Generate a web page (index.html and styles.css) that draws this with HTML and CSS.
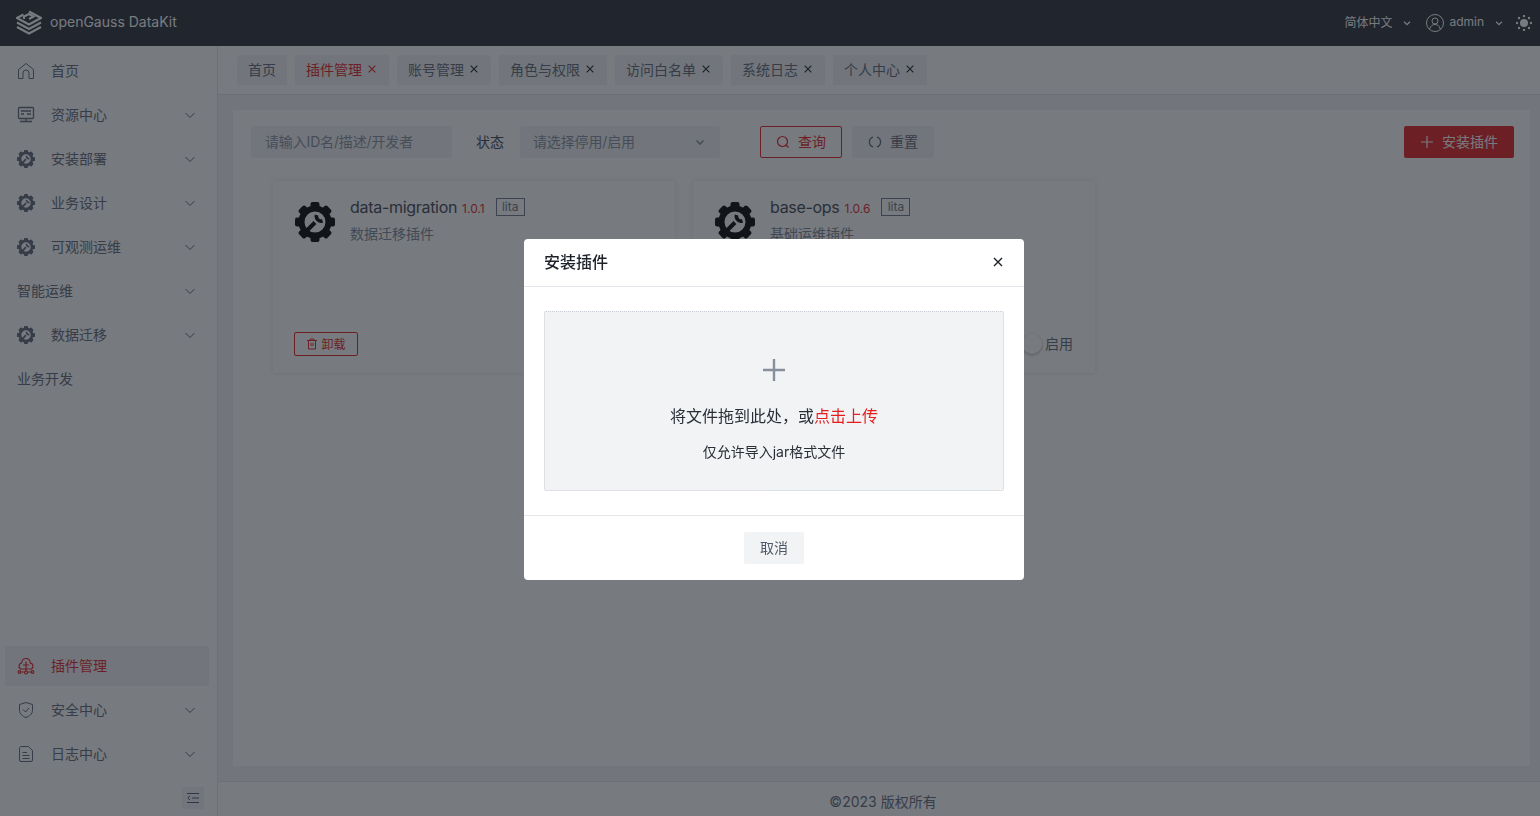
FILE: index.html
```html
<!DOCTYPE html>
<html lang="zh-CN">
<head>
    <meta charset="UTF-8">
    <meta name="viewport" content="width=device-width, initial-scale=1.0">
    <title>openGauss DataKit</title>
    <link rel="stylesheet" href="styles.css">
</head>
<body>
    <svg class="sprites" width="0" height="0">
        <symbol id="gear" viewBox="0 0 40 40">
            <circle cx="20" cy="20" r="13.5" fill="none" stroke="currentColor" stroke-width="6"/>
            <g fill="currentColor">
                <rect x="15.5" y="0" width="9" height="7" rx="2"/>
                <rect x="15.5" y="0" width="9" height="7" rx="2" transform="rotate(45 20 20)"/>
                <rect x="15.5" y="0" width="9" height="7" rx="2" transform="rotate(90 20 20)"/>
                <rect x="15.5" y="0" width="9" height="7" rx="2" transform="rotate(135 20 20)"/>
                <rect x="15.5" y="0" width="9" height="7" rx="2" transform="rotate(180 20 20)"/>
                <rect x="15.5" y="0" width="9" height="7" rx="2" transform="rotate(225 20 20)"/>
                <rect x="15.5" y="0" width="9" height="7" rx="2" transform="rotate(270 20 20)"/>
                <rect x="15.5" y="0" width="9" height="7" rx="2" transform="rotate(315 20 20)"/>
            </g>
            <path d="M10.5 30 L20 20.5" fill="none" stroke="currentColor" stroke-width="4"/>
            <path d="M21.5 13 A5 5 0 0 0 27.5 19" fill="none" stroke="currentColor" stroke-width="3.6"/>
        </symbol>
        <symbol id="chev" viewBox="0 0 12 12">
            <path d="M1.5 4 L6 8.5 L10.5 4" fill="none" stroke="currentColor" stroke-width="1"/>
        </symbol>
        <symbol id="chev-b" viewBox="0 0 12 12">
            <path d="M2.5 4.5 L6 8 L9.5 4.5" fill="none" stroke="currentColor" stroke-width="1.6"/>
        </symbol>
        <symbol id="close" viewBox="0 0 12 12">
            <path d="M2 2 L10 10 M10 2 L2 10" fill="none" stroke="currentColor" stroke-width="1.4"/>
        </symbol>
        <symbol id="plus" viewBox="0 0 14 14">
            <path d="M7 1 V13 M1 7 H13" fill="none" stroke="currentColor" stroke-width="1.2"/>
        </symbol>
    </svg>

    <header class="topbar">
        <svg class="logo" width="26" height="26" viewBox="0 0 26 26" fill="none" stroke="currentColor" stroke-width="2.2">
            <path d="M13 1.5 L25 8 L13 14.5 L1 8 L7.5 4.5"/>
            <path d="M8 9 L8 6.5 L13 4 L17.5 6.5 L13 9"/>
            <path d="M1 12.5 L13 19 L25 12.5"/>
            <path d="M1 17 L13 23.5 L25 17"/>
        </svg>
        <span class="brand">openGauss DataKit</span>
        <div class="top-right">
            <span class="top-txt">简体中文</span>
            <svg class="top-chev" width="10" height="10"><use href="#chev-b"/></svg>
            <svg class="user" width="18" height="18" viewBox="0 0 18 18" fill="none" stroke="currentColor">
                <circle cx="9" cy="9" r="8.5"/>
                <circle cx="9" cy="7" r="3"/>
                <path d="M3.8 15 C4.5 11.8 6.5 10.5 9 10.5 C11.5 10.5 13.5 11.8 14.2 15"/>
            </svg>
            <span class="top-txt">admin</span>
            <svg class="top-chev" width="10" height="10"><use href="#chev-b"/></svg>
            <svg class="sun" width="16" height="16" viewBox="0 0 16 16" fill="currentColor">
                <circle cx="8" cy="8" r="4"/>
                <circle cx="8" cy="1" r="1.2"/><circle cx="8" cy="15" r="1.2"/>
                <circle cx="1" cy="8" r="1.2"/><circle cx="15" cy="8" r="1.2"/>
                <circle cx="3" cy="3" r="1.2"/><circle cx="13" cy="3" r="1.2"/>
                <circle cx="3" cy="13" r="1.2"/><circle cx="13" cy="13" r="1.2"/>
            </svg>
        </div>
    </header>

    <div class="layout">
        <aside class="sidebar">
            <nav class="menu">
                <a class="menu-item">
                    <svg class="ico" viewBox="0 0 18 18" fill="none" stroke="currentColor"><path d="M1.5 7.5 L9 1.5 L16.5 7.5 V16.5 H12 V11 A3 3 0 0 0 6 11 V16.5 H1.5 Z"/></svg>
                    <span>首页</span>
                </a>
                <a class="menu-item">
                    <svg class="ico" viewBox="0 0 18 18" fill="none" stroke="currentColor" stroke-width="1.3"><rect x="1.5" y="1.5" width="15" height="11" rx="1"/><path d="M4 5 H14 M4 8 H7 M10 8 H14 M9 12.5 V15 M3 15.5 H15"/></svg>
                    <span>资源中心</span>
                    <svg class="chev" width="12" height="12"><use href="#chev"/></svg>
                </a>
                <a class="menu-item">
                    <svg class="ico"><use href="#gear"/></svg>
                    <span>安装部署</span>
                    <svg class="chev" width="12" height="12"><use href="#chev"/></svg>
                </a>
                <a class="menu-item">
                    <svg class="ico"><use href="#gear"/></svg>
                    <span>业务设计</span>
                    <svg class="chev" width="12" height="12"><use href="#chev"/></svg>
                </a>
                <a class="menu-item">
                    <svg class="ico"><use href="#gear"/></svg>
                    <span>可观测运维</span>
                    <svg class="chev" width="12" height="12"><use href="#chev"/></svg>
                </a>
                <a class="menu-item">
                    <span>智能运维</span>
                    <svg class="chev" width="12" height="12"><use href="#chev"/></svg>
                </a>
                <a class="menu-item">
                    <svg class="ico"><use href="#gear"/></svg>
                    <span>数据迁移</span>
                    <svg class="chev" width="12" height="12"><use href="#chev"/></svg>
                </a>
                <a class="menu-item">
                    <span>业务开发</span>
                </a>
            </nav>

            <nav class="menu menu-bottom">
                <a class="menu-item active">
                    <svg class="ico" viewBox="0 0 18 18" fill="none" stroke="currentColor" stroke-width="1.2"><path d="M3.5 12 C1 10 2 6.5 4.5 6.2 C5 3 7 1.5 9 1.5 C11 1.5 13 3 13.5 6.2 C16 6.5 17 10 14.5 12 Z"/><path d="M9 4.5 V14.5 M6 8 H12"/><circle cx="2.5" cy="15" r="1.3"/><circle cx="9" cy="15.5" r="1.5"/><circle cx="15.5" cy="15" r="1.3"/><path d="M4 15 H7.5 M10.5 15 H14"/></svg>
                    <span>插件管理</span>
                </a>
                <a class="menu-item">
                    <svg class="ico" viewBox="0 0 18 18" fill="none" stroke="currentColor"><path d="M9 1.5 L15.5 3.5 V9.5 C15.5 13 12 15.5 9 16.5 C6 15.5 2.5 13 2.5 9.5 V3.5 Z"/><path d="M6 8.5 L8.5 11 L12 7"/></svg>
                    <span>安全中心</span>
                    <svg class="chev" width="12" height="12"><use href="#chev"/></svg>
                </a>
                <a class="menu-item">
                    <svg class="ico" viewBox="0 0 18 18" fill="none" stroke="currentColor"><path d="M3.5 1.5 H11.5 L15.5 5.5 V15 A1.5 1.5 0 0 1 14 16.5 H4 A1.5 1.5 0 0 1 2.5 15 V2.5 Z"/><path d="M5.5 7.5 H10 M5.5 10.5 H12.5 M5.5 13.5 H12.5"/></svg>
                    <span>日志中心</span>
                    <svg class="chev" width="12" height="12"><use href="#chev"/></svg>
                </a>
            </nav>
            <div class="collapse">
                <svg width="12" height="12" viewBox="0 0 12 12" fill="none" stroke="currentColor"><path d="M0 1.5 H12 M5 6 H12 M0 10.5 H12 M3 4 L0.8 6 L3 8"/></svg>
            </div>
        </aside>

        <div class="main">
            <div class="tabs">
                <span class="tab">首页</span>
                <span class="tab on">插件管理 <svg width="10" height="10"><use href="#close"/></svg></span>
                <span class="tab">账号管理 <svg width="10" height="10"><use href="#close"/></svg></span>
                <span class="tab">角色与权限 <svg width="10" height="10"><use href="#close"/></svg></span>
                <span class="tab">访问白名单 <svg width="10" height="10"><use href="#close"/></svg></span>
                <span class="tab">系统日志 <svg width="10" height="10"><use href="#close"/></svg></span>
                <span class="tab">个人中心 <svg width="10" height="10"><use href="#close"/></svg></span>
            </div>

            <main class="content">
                <div class="panel">
                    <div class="filter">
                        <input class="field search" placeholder="请输入ID名/描述/开发者">
                        <span class="label">状态</span>
                        <div class="field select">
                            <span>请选择停用/启用</span>
                            <svg width="12" height="12"><use href="#chev-b"/></svg>
                        </div>
                        <button class="btn outline">
                            <svg width="14" height="14" viewBox="0 0 14 14" fill="none" stroke="currentColor" stroke-width="1.2"><circle cx="6.5" cy="6.5" r="5"/><path d="M10 10 L12.5 12.5"/></svg>
                            查询
                        </button>
                        <button class="btn gray">
                            <svg width="14" height="14" viewBox="0 0 14 14" fill="none" stroke="currentColor" stroke-width="1.3"><path d="M5 2.2 A5 5 0 0 0 5 11.8 M9 2.2 A5 5 0 0 1 9 11.8"/></svg>
                            重置
                        </button>
                        <button class="btn primary">
                            <svg width="14" height="14"><use href="#plus"/></svg>
                            安装插件
                        </button>
                    </div>

                    <div class="cards">
                        <div class="card">
                            <div class="card-top">
                                <svg class="plug-ico"><use href="#gear"/></svg>
                                <div>
                                    <div class="title-row">
                                        <span class="name">data-migration</span>
                                        <span class="ver">1.0.1</span>
                                        <span class="tag">lita</span>
                                    </div>
                                    <div class="desc">数据迁移插件</div>
                                </div>
                            </div>
                            <div class="card-foot">
                                <button class="btn-sm">
                                    <svg width="12" height="12" viewBox="0 0 12 12" fill="none" stroke="currentColor"><path d="M1 2.5 H11 M4 2.5 V1 H8 V2.5 M2.5 2.5 V11 H9.5 V2.5 M5 5 V8 M7 5 V8"/></svg>
                                    卸载
                                </button>
                                <div class="switch-wrap">
                                    <span class="switch"><i class="knob"></i></span>
                                    <span class="switch-txt">启用</span>
                                </div>
                            </div>
                        </div>
                        <div class="card">
                            <div class="card-top">
                                <svg class="plug-ico"><use href="#gear"/></svg>
                                <div>
                                    <div class="title-row">
                                        <span class="name">base-ops</span>
                                        <span class="ver">1.0.6</span>
                                        <span class="tag">lita</span>
                                    </div>
                                    <div class="desc">基础运维插件</div>
                                </div>
                            </div>
                            <div class="card-foot">
                                <button class="btn-sm">
                                    <svg width="12" height="12" viewBox="0 0 12 12" fill="none" stroke="currentColor"><path d="M1 2.5 H11 M4 2.5 V1 H8 V2.5 M2.5 2.5 V11 H9.5 V2.5 M5 5 V8 M7 5 V8"/></svg>
                                    卸载
                                </button>
                                <div class="switch-wrap">
                                    <span class="switch"><i class="knob"></i></span>
                                    <span class="switch-txt">启用</span>
                                </div>
                            </div>
                        </div>
                    </div>
                </div>
            </main>

            <footer class="foot">©2023 版权所有</footer>
        </div>
    </div>

    <div class="mask">
        <div class="modal">
            <div class="modal-head">
                <span>安装插件</span>
                <svg width="12" height="12"><use href="#close"/></svg>
            </div>
            <div class="modal-body">
                <div class="upload">
                    <svg class="up-plus" width="26" height="26" viewBox="0 0 26 26" fill="none" stroke="currentColor" stroke-width="2.4"><path d="M13 2 V24 M2 13 H24"/></svg>
                    <div class="up-main">将文件拖到此处，或<em>点击上传</em></div>
                    <div class="up-sub">仅允许导入jar格式文件</div>
                </div>
            </div>
            <div class="modal-foot">
                <button class="btn-cancel">取消</button>
            </div>
        </div>
    </div>
</body>
</html>
```

FILE: styles.css
```css
* {
    box-sizing: border-box;
}

body {
    margin: 0;
    height: 100vh;
    overflow: hidden;
    display: flex;
    flex-direction: column;
    background-color: #fff;
    color: #4e5969;
    font-family: Inter, "Noto Sans CJK SC", sans-serif;
    font-size: 14px;
}

button,
input {
    font: inherit;
}

.sprites {
    display: none;
}

/* top bar */
.topbar {
    height: 46px;
    flex: none;
    display: flex;
    align-items: center;
    padding: 0 8px 0 16px;
    background-color: #272b35;
    color: #fff;
}

.logo {
    flex: none;
}

.brand {
    margin: 0 0 3px 8px;
    font-size: 14px;
}

.top-right {
    margin-left: auto;
    display: flex;
    align-items: center;
}

.top-txt {
    margin-bottom: 3px;
    font-size: 12px;
}

.top-chev {
    margin: 0 0 0 10px;
}

.user {
    margin: 0 5px 0 14px;
}

.sun {
    margin-left: 12px;
}

.layout {
    flex: 1;
    min-height: 0;
    display: flex;
}

/* left menu */
.sidebar {
    width: 218px;
    flex: none;
    display: flex;
    flex-direction: column;
    padding: 3px 8px 7px 5px;
    border-right: 1px solid #e5e6eb;
    background-color: #fff;
}

.menu-item {
    height: 44px;
    display: flex;
    align-items: center;
    padding: 0 13px 0 12px;
    color: #5c6675;
}

.menu-item span {
    margin-bottom: 2px;
}

.menu-bottom {
    margin-top: auto;
}

.menu-bottom .menu-item {
    margin-bottom: 4px;
    height: 40px;
}

.menu-item.active {
    background-color: #f2f3f5;
    color: #e41d1d;
    border-radius: 2px;
}

.ico {
    width: 18px;
    height: 18px;
    margin-right: 16px;
    flex: none;
}

.chev {
    margin-left: auto;
}

.collapse {
    align-self: flex-end;
    width: 22px;
    height: 22px;
    margin: 9px 5px 0 0;
    display: flex;
    align-items: center;
    justify-content: center;
    background-color: #f2f3f5;
    color: #4e5969;
}

/* tabs */
.main {
    flex: 1;
    min-width: 0;
    display: flex;
    flex-direction: column;
    background-color: #f2f3f5;
}

.tabs {
    height: 49px;
    flex: none;
    display: flex;
    align-items: center;
    gap: 8px;
    padding: 0 19px;
    border-bottom: 1px solid #e5e6eb;
    background-color: #fff;
}

.tab {
    height: 30px;
    display: flex;
    align-items: center;
    gap: 5px;
    padding: 0 11px 2px;
    background-color: #f2f3f5;
    border-radius: 2px;
    color: #5c6675;
}

.tab svg {
    margin-right: 1px;
    color: #1d2129;
}

.tab.on,
.tab.on svg {
    color: #e41d1d;
}

/* plugin list */
.content {
    flex: 1;
    min-height: 0;
    padding: 15px 10px 15px 15px;
}

.panel {
    height: 100%;
    padding: 16px 16px 0 18px;
    background-color: #fff;
}

.filter {
    display: flex;
    align-items: center;
}

.field {
    height: 32px;
    border: 0;
    border-radius: 2px;
    background-color: #f2f3f5;
    padding: 0 14px 2px;
    color: #86909c;
    letter-spacing: -0.15px;
    outline: none;
}

.field::placeholder {
    color: #86909c;
}

.search {
    width: 201px;
}

.label {
    margin: 0 16px 2px 24px;
    color: #3c4450;
}

.select {
    width: 200px;
    display: flex;
    align-items: center;
    justify-content: space-between;
    padding-left: 13px;
}

.select svg {
    margin-top: 2px;
}

.btn {
    height: 32px;
    display: flex;
    align-items: center;
    gap: 8px;
    padding: 0 15px 2px;
    border: 1px solid transparent;
    border-radius: 2px;
    cursor: pointer;
}

.btn svg {
    margin-top: 2px;
}

.outline {
    margin-left: 40px;
    background-color: #fff;
    border-color: #e41d1d;
    color: #e41d1d;
}

.gray {
    margin-left: 10px;
    background-color: #f2f3f5;
    color: #5c6675;
}

.primary {
    margin-left: auto;
    background-color: #e41d1d;
    color: #fff;
}

.cards {
    display: flex;
    gap: 18px;
    margin: 23px 0 0 22px;
}

.card {
    width: 402px;
    height: 192px;
    display: flex;
    flex-direction: column;
    padding: 17px 22px 17px 21px;
    background-color: #fff;
    box-shadow: 0 0 6px rgba(0, 0, 0, 0.1);
}

.card-top {
    display: flex;
    gap: 15px;
    padding-left: 1px;
}

.plug-ico {
    width: 40px;
    height: 40px;
    margin-top: 4px;
    flex: none;
    color: #000;
}

.title-row {
    display: flex;
    align-items: center;
    height: 18px;
}

.name {
    font-size: 16px;
    letter-spacing: -0.3px;
    color: #3c4450;
}

.ver {
    margin: 2px 0 0 5px;
    font-size: 12px;
    color: #e41d1d;
}

.tag {
    width: 29px;
    margin-left: 11px;
    height: 18px;
    border: 1px solid #6b7785;
    font-size: 12px;
    line-height: 16px;
    text-align: center;
    color: #6b7785;
}

.desc {
    margin-top: 7px;
    color: #7a8594;
}

.card-foot {
    margin-top: auto;
    display: flex;
    align-items: center;
    justify-content: space-between;
}

.btn-sm {
    height: 24px;
    width: 64px;
    display: flex;
    align-items: center;
    justify-content: center;
    gap: 3px;
    padding: 0 0 2px;
    border: 1px solid #e41d1d;
    border-radius: 2px;
    background-color: #fff;
    color: #e41d1d;
    font-size: 12px;
}

.btn-sm svg {
    margin-top: 2px;
}

.switch-wrap {
    display: flex;
    align-items: center;
    gap: 3px;
}

.switch-txt {
    margin-bottom: 2px;
    color: #5c6675;
}

.switch {
    width: 40px;
    height: 24px;
    display: flex;
    align-items: center;
    justify-content: flex-end;
}

.knob {
    width: 20px;
    height: 20px;
    border-radius: 50%;
    background-color: #fff;
    box-shadow: 0 1px 3px rgba(0, 0, 0, 0.35);
}

.foot {
    height: 35px;
    flex: none;
    display: flex;
    align-items: center;
    justify-content: center;
    padding: 4px 0 0 8px;
    border-top: 1px solid #e5e6eb;
    background-color: #fff;
    color: #5c6675;
}

/* dialog */
.mask {
    position: fixed;
    inset: 0;
    display: flex;
    justify-content: center;
    align-items: flex-start;
    padding: 239px 0 0 8px;
    background-color: rgba(29, 33, 41, 0.6);
}

.modal {
    width: 500px;
    border-radius: 4px;
    background-color: #fff;
    overflow: hidden;
}

.modal-head {
    height: 48px;
    display: flex;
    align-items: center;
    justify-content: space-between;
    padding: 0 20px 4px;
    border-bottom: 1px solid #e5e6eb;
    font-size: 16px;
    font-weight: 500;
    color: #1d2129;
}

.modal-head svg {
    margin-top: 2px;
}

.modal-body {
    padding: 24px 20px;
}

.upload {
    height: 180px;
    display: flex;
    flex-direction: column;
    align-items: center;
    border: 1px dotted #c9cdd4;
    border-radius: 2px;
    background-color: #f2f3f5;
    color: #2a2e36;
}

.up-plus {
    margin-top: 45px;
    color: #86909c;
}

.up-main {
    margin-top: 20px;
    font-size: 16px;
}

.up-main em {
    font-style: normal;
    color: #e41d1d;
}

.up-sub {
    margin-top: 14px;
}

.modal-foot {
    height: 65px;
    display: flex;
    justify-content: center;
    padding-top: 16px;
    border-top: 1px solid #e5e6eb;
}

.btn-cancel {
    width: 60px;
    height: 32px;
    padding: 0 0 2px;
    border: 0;
    border-radius: 2px;
    background-color: #f2f3f5;
    color: #4e5969;
}
```
